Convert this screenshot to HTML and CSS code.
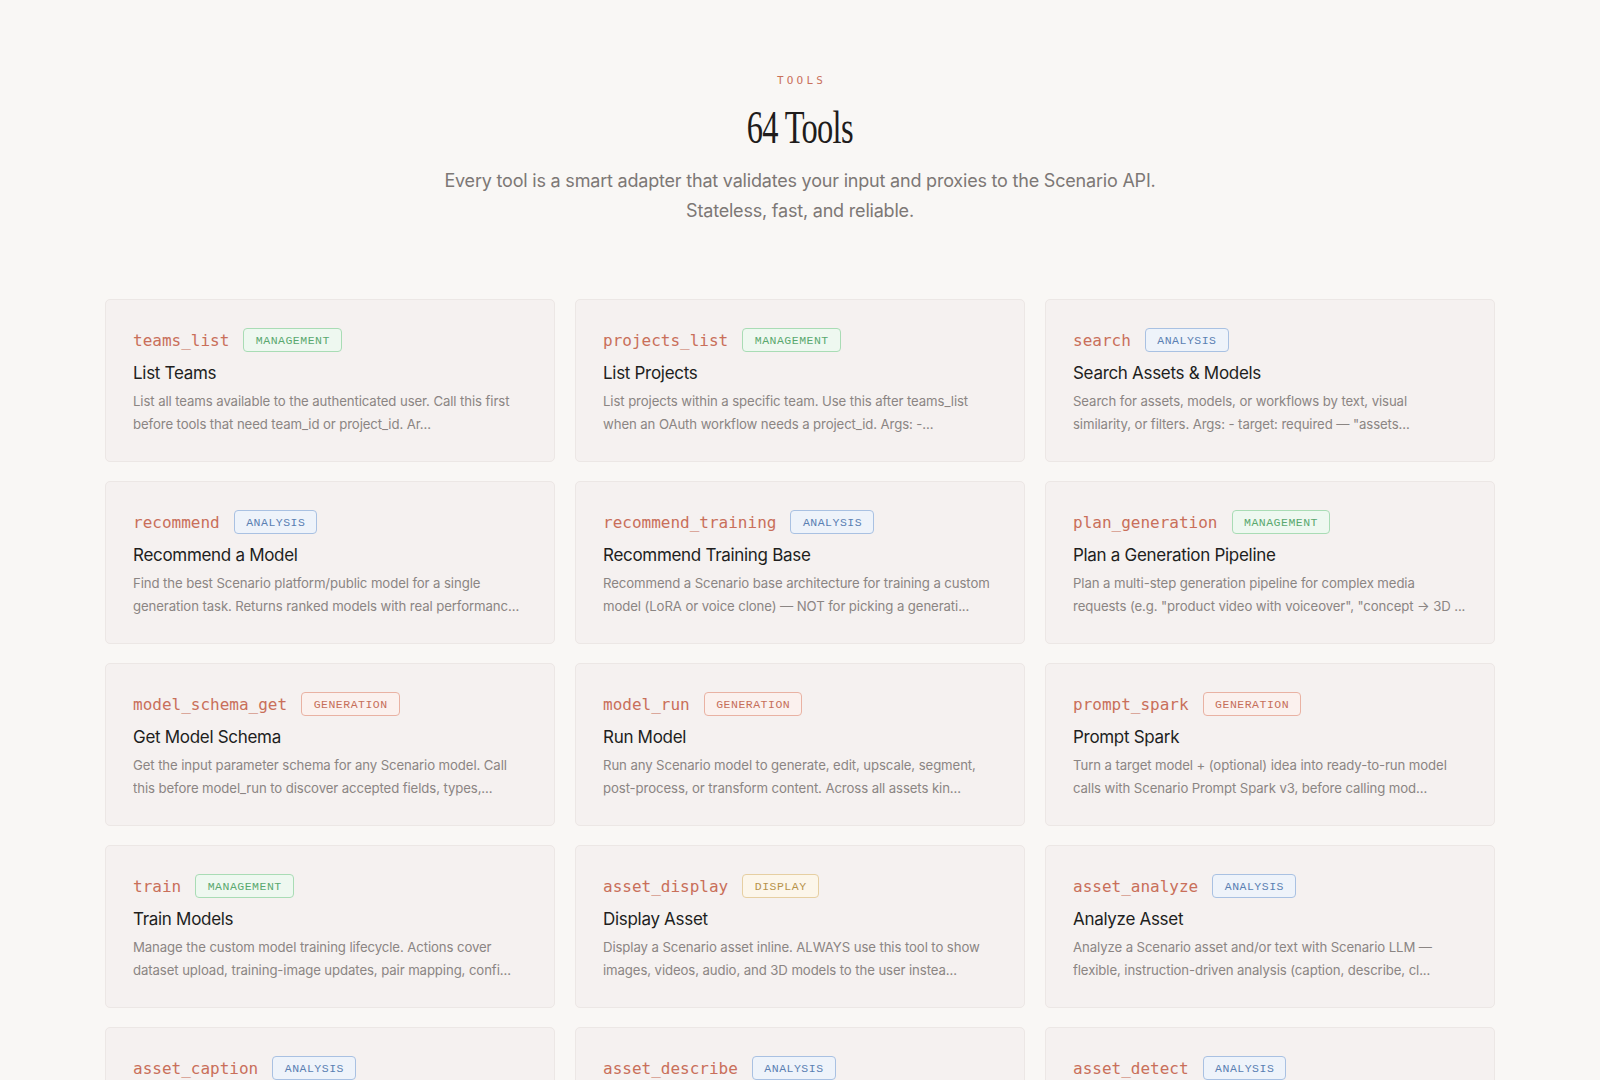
FILE: index.html
```html
<!DOCTYPE html>
<html lang="en">
<head>
<meta charset="utf-8">
<title>Tools</title>
<link rel="stylesheet" href="styles.css">
</head>
<body>
<section class="tools">
  <header class="tools-head">
    <div class="eyebrow">Tools</div>
    <h2 class="title"><span>64 Tools</span></h2>
    <p class="lede">Every tool is a smart adapter that validates your input and proxies to the Scenario API. Stateless, fast, and reliable.</p>
  </header>
  <div class="grid">
    <article class="card">
      <div class="card-head"><code class="name">teams_list</code><span class="tag tag-management">MANAGEMENT</span></div>
      <h3 class="card-title">List Teams</h3>
      <p class="desc">List all teams available to the authenticated user. Call this first before tools that need team_id or project_id. Ar...</p>
    </article>
    <article class="card">
      <div class="card-head"><code class="name">projects_list</code><span class="tag tag-management">MANAGEMENT</span></div>
      <h3 class="card-title">List Projects</h3>
      <p class="desc">List projects within a specific team. Use this after teams_list when an OAuth workflow needs a project_id. Args: -...</p>
    </article>
    <article class="card">
      <div class="card-head"><code class="name">search</code><span class="tag tag-analysis">ANALYSIS</span></div>
      <h3 class="card-title">Search Assets &amp; Models</h3>
      <p class="desc">Search for assets, models, or workflows by text, visual similarity, or filters. Args: - target: required — "assets...</p>
    </article>
    <article class="card">
      <div class="card-head"><code class="name">recommend</code><span class="tag tag-analysis">ANALYSIS</span></div>
      <h3 class="card-title">Recommend a Model</h3>
      <p class="desc">Find the best Scenario platform/public model for a single generation task. Returns ranked models with real performanc...</p>
    </article>
    <article class="card">
      <div class="card-head"><code class="name">recommend_training</code><span class="tag tag-analysis">ANALYSIS</span></div>
      <h3 class="card-title">Recommend Training Base</h3>
      <p class="desc">Recommend a Scenario base architecture for training a custom model (LoRA or voice clone) — NOT for picking a generati...</p>
    </article>
    <article class="card">
      <div class="card-head"><code class="name">plan_generation</code><span class="tag tag-management">MANAGEMENT</span></div>
      <h3 class="card-title">Plan a Generation Pipeline</h3>
      <p class="desc">Plan a multi-step generation pipeline for complex media requests (e.g. "product video with voiceover", "concept → 3D ...</p>
    </article>
    <article class="card">
      <div class="card-head"><code class="name">model_schema_get</code><span class="tag tag-generation">GENERATION</span></div>
      <h3 class="card-title">Get Model Schema</h3>
      <p class="desc">Get the input parameter schema for any Scenario model. Call this before model_run to discover accepted fields, types,...</p>
    </article>
    <article class="card">
      <div class="card-head"><code class="name">model_run</code><span class="tag tag-generation">GENERATION</span></div>
      <h3 class="card-title">Run Model</h3>
      <p class="desc">Run any Scenario model to generate, edit, upscale, segment, post-process, or transform content. Across all assets kin...</p>
    </article>
    <article class="card">
      <div class="card-head"><code class="name">prompt_spark</code><span class="tag tag-generation">GENERATION</span></div>
      <h3 class="card-title">Prompt Spark</h3>
      <p class="desc">Turn a target model + (optional) idea into ready-to-run model calls with Scenario Prompt Spark v3, before calling mod...</p>
    </article>
    <article class="card">
      <div class="card-head"><code class="name">train</code><span class="tag tag-management">MANAGEMENT</span></div>
      <h3 class="card-title">Train Models</h3>
      <p class="desc">Manage the custom model training lifecycle. Actions cover dataset upload, training-image updates, pair mapping, confi...</p>
    </article>
    <article class="card">
      <div class="card-head"><code class="name">asset_display</code><span class="tag tag-display">DISPLAY</span></div>
      <h3 class="card-title">Display Asset</h3>
      <p class="desc">Display a Scenario asset inline. ALWAYS use this tool to show images, videos, audio, and 3D models to the user instea...</p>
    </article>
    <article class="card">
      <div class="card-head"><code class="name">asset_analyze</code><span class="tag tag-analysis">ANALYSIS</span></div>
      <h3 class="card-title">Analyze Asset</h3>
      <p class="desc">Analyze a Scenario asset and/or text with Scenario LLM — flexible, instruction-driven analysis (caption, describe, cl...</p>
    </article>
    <article class="card">
      <div class="card-head"><code class="name">asset_caption</code><span class="tag tag-analysis">ANALYSIS</span></div>
      <h3 class="card-title">Caption Asset</h3>
      <p class="desc">Generate a caption for a Scenario asset using a vision model. Returns a short natural-language description of the...</p>
    </article>
    <article class="card">
      <div class="card-head"><code class="name">asset_describe</code><span class="tag tag-analysis">ANALYSIS</span></div>
      <h3 class="card-title">Describe Asset</h3>
      <p class="desc">Produce a detailed structured description of a Scenario asset, including subjects, style, composition and...</p>
    </article>
    <article class="card">
      <div class="card-head"><code class="name">asset_detect</code><span class="tag tag-analysis">ANALYSIS</span></div>
      <h3 class="card-title">Detect Objects</h3>
      <p class="desc">Detect objects within a Scenario asset and return bounding boxes with labels and confidence scores for each...</p>
    </article>
  </div>
</section>
</body>
</html>
```
FILE: styles.css
```css
* { box-sizing: border-box; }
html, body { margin: 0; padding: 0; }
body {
  background: #f9f7f5;
  font-family: Inter, "Noto Sans", sans-serif;
  color: #2a2726;
}
.tools {
  padding: 73px 0 80px;
}
.tools-head {
  text-align: center;
}
.eyebrow {
  font-family: "DejaVu Sans Mono", monospace;
  font-size: 11px;
  line-height: 16px;
  letter-spacing: 3.2px;
  text-transform: uppercase;
  color: #c9705b;
  padding-left: 3px;
}
.title {
  margin: 12px 0 0;
  font-family: "Liberation Serif", serif;
  font-weight: 400;
  font-size: 47px;
  line-height: 52px;
  color: #1f1c1b;
}
.title span {
  display: inline-block;
  letter-spacing: -1px;
  transform: scaleX(0.69);
}
.lede {
  margin: 13px auto 0;
  max-width: 760px;
  font-size: 18px;
  line-height: 29.5px;
  color: #7d7875;
  letter-spacing: -0.2px;
}
.grid {
  width: 1390px;
  margin: 74px auto 0;
  display: grid;
  grid-template-columns: repeat(3, 1fr);
  column-gap: 20px;
  row-gap: 19px;
}
.card {
  background: #f5f1f0;
  border: 1px solid #ece7e5;
  border-radius: 5px;
  padding: 28px 27px 27px;
  height: 163px;
}
.card-head {
  display: flex;
  align-items: center;
  gap: 14px;
  height: 24px;
}
.name {
  font-family: "DejaVu Sans Mono", monospace;
  font-size: 16px;
  color: #c96f5a;
}
.tag {
  display: inline-flex;
  align-items: center;
  height: 24px;
  padding: 0 11px 0 11.5px;
  border: 1px solid;
  border-radius: 4px;
  font-family: "Liberation Mono", monospace;
  font-size: 11.5px;
  letter-spacing: 0.5px;
}
.tag-management { color: #5aa86f; border-color: #a9dcb5; background: #eef8f0; }
.tag-analysis { color: #5a7fb2; border-color: #a9c1e2; background: #eef3fa; }
.tag-generation { color: #c66f5a; border-color: #e9b2a3; background: #fbf1ee; }
.tag-display { color: #b7934a; border-color: #e6cfa2; background: #fcf6ea; }
.card-title {
  margin: 9px 0 0;
  font-size: 17px;
  line-height: 24px;
  font-weight: 400;
  letter-spacing: -0.3px;
  color: #211e1d;
}
.desc {
  margin: 5px 0 0;
  font-size: 13.2px;
  line-height: 23px;
  color: #8b8583;
  letter-spacing: -0.1px;
  display: -webkit-box;
  -webkit-line-clamp: 2;
  -webkit-box-orient: vertical;
  overflow: hidden;
}
```
